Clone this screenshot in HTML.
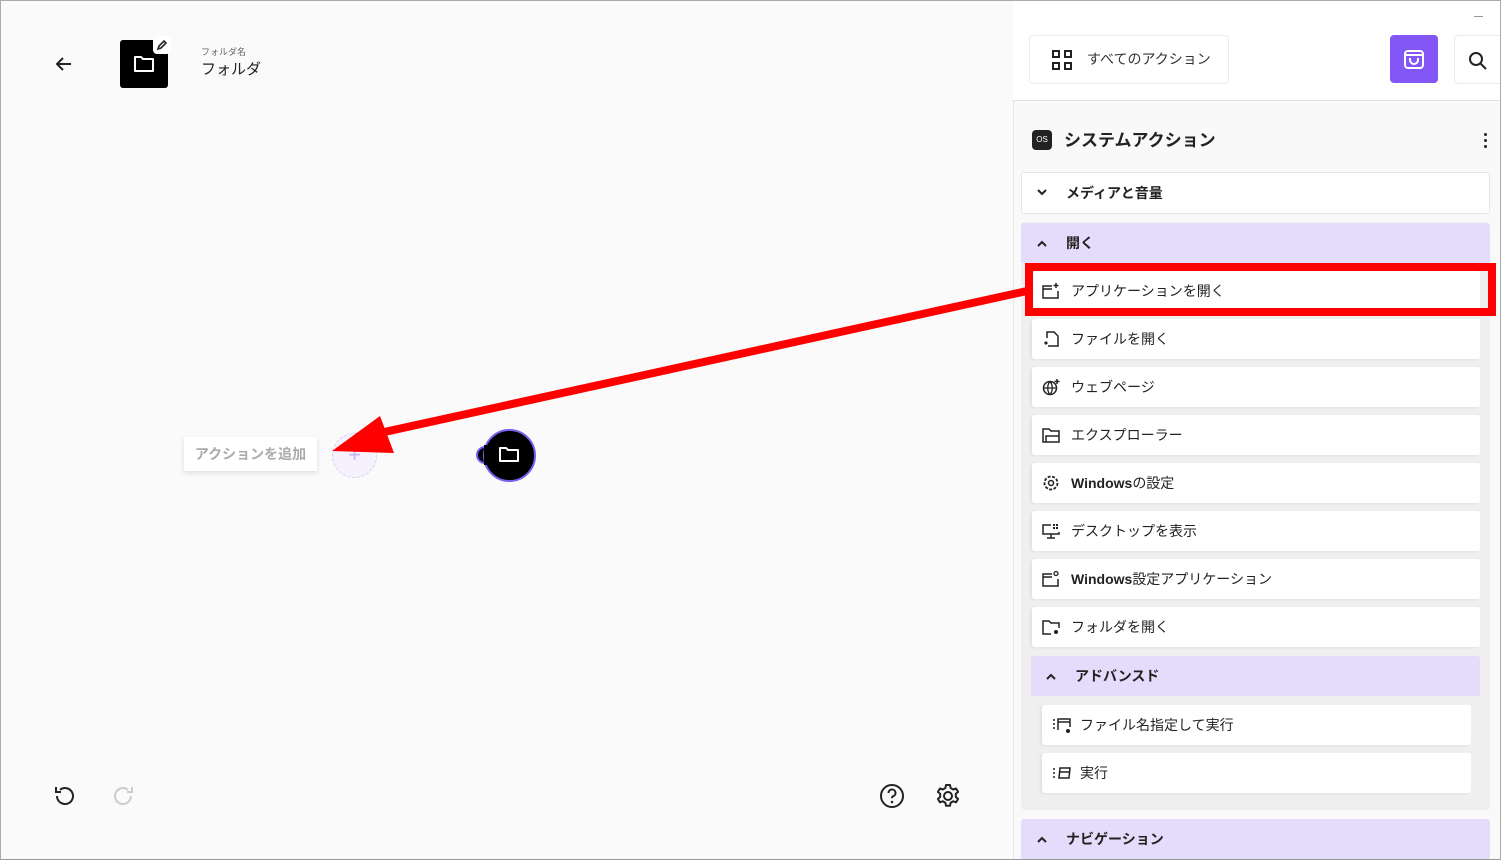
<!DOCTYPE html>
<html><head><meta charset="utf-8"><style>
*{box-sizing:border-box;margin:0;padding:0}
body{width:1501px;height:860px;overflow:hidden;background:#fafafa;font-family:"Liberation Sans","Noto Sans CJK JP",sans-serif;color:#222;position:relative}
.a{position:absolute}
.item{position:absolute;left:1032px;width:448px;height:40px;background:#fff;border-radius:3px;box-shadow:-2px 1px 2px #e2e2e2;font-size:14px;display:flex;align-items:center;padding-left:39px}
.item svg{position:absolute;left:10px;top:11px}
.hdr{position:absolute;background:#e4dcfa;height:40px;font-size:14px;font-weight:bold;display:flex;align-items:center;border-radius:3px 3px 0 0}
</style></head><body>
<div class="a" style="left:0;top:0;width:1501px;height:860px;border:1px solid #aaa;border-bottom-color:#999;pointer-events:none;z-index:9"></div>
<svg class="a" style="left:54px;top:55px" width="20" height="18" viewBox="0 0 20 18"><path d="M17 9H3M9 3L3 9l6 6" stroke="#222" stroke-width="2" fill="none"/></svg>
<div class="a" style="left:120px;top:40px;width:48px;height:48px;background:#000;border-radius:3px"></div>
<svg class="a" style="left:133px;top:54px" width="22" height="20" viewBox="0 0 22 20"><path d="M2 3h6l2 2h10v12H2z" stroke="#fff" stroke-width="2" fill="none" stroke-linejoin="round"/></svg>
<div class="a" style="left:153px;top:36px;width:18px;height:18px;background:#fff;border-radius:4px"></div>
<svg class="a" style="left:156px;top:39px" width="12" height="12" viewBox="0 0 12 12"><path d="M2 10l1-3 5-5 2 2-5 5z" stroke="#222" stroke-width="1.6" fill="none"/></svg>
<div class="a" style="left:201px;top:45px;font-size:9px;color:#666">フォルダ名</div>
<div class="a" style="left:201px;top:58px;font-size:15px;color:#222">フォルダ</div>
<div class="a" style="left:184px;top:437px;width:133px;height:34px;background:#fff;box-shadow:0 2px 5px #ddd;font-size:14px;color:#aaa;display:flex;align-items:center;justify-content:center;font-weight:bold">アクションを追加</div>
<div class="a" style="left:332px;top:433px;width:45px;height:45px;border:1.5px dashed #d8cffa;border-radius:50%;background:#f5f2fd;color:#c5b5f5;font-size:22px;text-align:center;line-height:42px">+</div>
<div class="a" style="left:476px;top:446px;width:18px;height:18px;border-radius:50%;background:#000;border:2px solid #7b5cf0"></div>
<div class="a" style="left:483px;top:429px;width:53px;height:53px;border-radius:50%;background:#000;border:2px solid #7b5cf0"></div>
<div class="a" style="left:484px;top:445px;width:14px;height:20px;background:#000"></div>
<svg class="a" style="left:498px;top:445px" width="22" height="19" viewBox="0 0 22 19"><path d="M2 3h6l2 2h10v11H2z" stroke="#fff" stroke-width="2" fill="none" stroke-linejoin="round"/></svg>
<svg class="a" style="left:52px;top:784px" width="24" height="24" viewBox="0 0 24 24"><path d="M5 12a8 8 0 1 0 3-6.2M4 3v5h5" stroke="#222" stroke-width="2" fill="none"/></svg>
<svg class="a" style="left:112px;top:784px" width="24" height="24" viewBox="0 0 24 24"><path d="M19 12a8 8 0 1 1-3-6.2M20 3v5h-5" stroke="#ccc" stroke-width="2" fill="none"/></svg>
<svg class="a" style="left:879px;top:783px" width="26" height="26" viewBox="0 0 26 26"><circle cx="13" cy="13" r="11" stroke="#222" stroke-width="2" fill="none"/><path d="M9.5 10a3.5 3.5 0 1 1 4.5 3.3c-.8.3-1 1-1 2" stroke="#222" stroke-width="2" fill="none"/><circle cx="13" cy="19" r="1.3" fill="#222"/></svg>
<svg class="a" style="left:935px;top:783px" width="26" height="26" viewBox="0 0 26 26"><circle cx="13" cy="13" r="4" stroke="#222" stroke-width="2" fill="none"/><path d="M11 2h4l.6 3 2.6 1.5 2.9-1 2 3.4-2.3 2v3l2.3 2-2 3.4-2.9-1-2.6 1.5-.6 3h-4l-.6-3-2.6-1.5-2.9 1-2-3.4 2.3-2v-3l-2.3-2 2-3.4 2.9 1L10.4 5z" stroke="#222" stroke-width="2" fill="none" stroke-linejoin="round"/></svg>
<div class="a" style="left:1013px;top:0;width:488px;height:860px;background:#f9f9f9;border-left:1px solid #e8e8e8"></div>
<div class="a" style="left:1013px;top:0;width:488px;height:101px;background:#fff;border-bottom:1px solid #e2e2e2"></div>
<div class="a" style="left:1474px;top:16px;width:9px;height:1px;background:#999"></div>
<div class="a" style="left:1029px;top:35px;width:200px;height:49px;border:1px solid #eaeaea;border-radius:4px;background:#fff;font-size:14px;color:#333;padding-left:57px;line-height:47px">すべてのアクション</div>
<svg class="a" style="left:1052px;top:50px" width="20" height="20" viewBox="0 0 20 20"><g stroke="#222" stroke-width="2" fill="none"><rect x="1" y="1" width="6" height="6"/><rect x="13" y="1" width="6" height="6"/><rect x="1" y="13" width="6" height="6"/><rect x="13" y="13" width="6" height="6"/></g></svg>
<div class="a" style="left:1390px;top:35px;width:48px;height:48px;background:#8357f5;border-radius:4px"></div>
<svg class="a" style="left:1402px;top:47px" width="24" height="24" viewBox="0 0 24 24"><rect x="3" y="4" width="18" height="17" rx="3" stroke="#fff" stroke-width="2" fill="none"/><path d="M3 8h18M8 11v2a4 4 0 0 0 8 0v-2" stroke="#fff" stroke-width="2" fill="none"/></svg>
<div class="a" style="left:1454px;top:35px;width:60px;height:49px;border:1px solid #eaeaea;border-radius:4px;background:#fff"></div>
<svg class="a" style="left:1468px;top:51px" width="20" height="20" viewBox="0 0 20 20"><circle cx="8" cy="8" r="6" stroke="#222" stroke-width="2" fill="none"/><path d="M12.5 12.5L18 18" stroke="#222" stroke-width="2"/></svg>
<div class="a" style="left:1032px;top:130px;width:20px;height:20px;background:#222;border-radius:4px;color:#fff;font-size:8px;text-align:center;line-height:20px">OS</div>
<div class="a" style="left:1064px;top:126px;font-size:17px;font-weight:bold;color:#222">システムアクション</div>
<div class="a" style="left:1484px;top:133px;width:3px;height:3px;background:#222;border-radius:50%;box-shadow:0 6px 0 #222,0 12px 0 #222"></div>
<div class="a" style="left:1021px;top:172px;width:469px;height:42px;background:#fff;border:1px solid #e6e6e6;border-radius:3px;font-size:14px;font-weight:bold;padding-left:44px;line-height:40px">メディアと音量</div>
<svg class="a" style="left:1036px;top:187px" width="12" height="10" viewBox="0 0 12 10"><path d="M2 3l4 4 4-4" stroke="#222" stroke-width="2" fill="none"/></svg>
<div class="a" style="left:1021px;top:222px;width:469px;height:588px;background:#efefef;border-radius:4px"></div>
<div class="hdr" style="left:1021px;top:223px;width:469px;padding-left:45px">開く</div>
<svg class="a" style="left:1036px;top:239px" width="12" height="10" viewBox="0 0 12 10"><path d="M2 7l4-4 4 4" stroke="#222" stroke-width="2" fill="none"/></svg>
<div class="item" style="top:271px"><svg width="18" height="18" viewBox="0 0 18 18"><path d="M10 4H1v12h15V9M1 7h9" stroke="#222" stroke-width="1.5" fill="none"/><path d="M14 1v5M11.5 3.5h5" stroke="#222" stroke-width="1.5"/></svg>アプリケーションを開く</div>
<div class="item" style="top:319px"><svg width="18" height="18" viewBox="0 0 18 18"><path d="M5 8V2h7l4 4v10H6" stroke="#222" stroke-width="1.5" fill="none"/><path d="M4 11l2 2-2 2-2-2z" fill="#222"/></svg>ファイルを開く</div>
<div class="item" style="top:367px"><svg width="18" height="18" viewBox="0 0 18 18"><circle cx="8" cy="10" r="6.5" stroke="#222" stroke-width="1.5" fill="none"/><path d="M2 10h12M8 3.5c-3 3-3 10 0 13M8 3.5c3 3 3 10 0 13" stroke="#222" stroke-width="1.3" fill="none"/><path d="M15 1v5M12.5 3.5h5" stroke="#222" stroke-width="1.5"/></svg>ウェブページ</div>
<div class="item" style="top:415px"><svg width="18" height="18" viewBox="0 0 18 18"><path d="M1 3h6l2 2h8v11H1zM4 16v-6h13" stroke="#222" stroke-width="1.5" fill="none"/></svg>エクスプローラー</div>
<div class="item" style="top:463px"><svg width="18" height="18" viewBox="0 0 18 18"><circle cx="9" cy="9" r="2.5" stroke="#222" stroke-width="1.5" fill="none"/><circle cx="9" cy="9" r="6.5" stroke="#222" stroke-width="1.8" fill="none" stroke-dasharray="3 1.5"/></svg><span><b>Windows</b>の設定</span></div>
<div class="item" style="top:511px"><svg width="18" height="18" viewBox="0 0 18 18"><path d="M9 3H1v9h16v-2M9 12v4M5 16h8" stroke="#222" stroke-width="1.5" fill="none"/><path d="M11 2h2v2h-2zM14 2h2v2h-2zM11 5h2v2h-2zM14 5h2v2h-2z" fill="#222"/></svg>デスクトップを表示</div>
<div class="item" style="top:559px"><svg width="18" height="18" viewBox="0 0 18 18"><path d="M10 4H1v12h15V9M1 7h9" stroke="#222" stroke-width="1.5" fill="none"/><circle cx="14" cy="3.5" r="2" stroke="#222" stroke-width="1.3" fill="none"/></svg><span><b>Windows</b>設定アプリケーション</span></div>
<div class="item" style="top:607px"><svg width="18" height="18" viewBox="0 0 18 18"><path d="M9 16H1V3h6l2 2h8v5" stroke="#222" stroke-width="1.5" fill="none"/><circle cx="14" cy="14" r="2" fill="#222"/></svg>フォルダを開く</div>
<div class="hdr" style="left:1031px;top:656px;width:449px;padding-left:44px">アドバンスド</div>
<svg class="a" style="left:1045px;top:672px" width="12" height="10" viewBox="0 0 12 10"><path d="M2 7l4-4 4 4" stroke="#222" stroke-width="2" fill="none"/></svg>
<div class="item" style="left:1042px;top:705px;width:429px;padding-left:38px"><svg width="20" height="18" viewBox="0 0 20 18"><path d="M1 4h2M1 8h2M1 12h2M6 14V3h12v8M6 6h12" stroke="#222" stroke-width="1.5" fill="none"/><circle cx="16" cy="15" r="2" fill="#222"/></svg>ファイル名指定して実行</div>
<div class="item" style="left:1042px;top:753px;width:429px;padding-left:38px"><svg width="20" height="18" viewBox="0 0 20 18"><path d="M1 5h2M1 9h2M1 13h2M7 14l1-10h10l-1 10zM7.5 8h10" stroke="#222" stroke-width="1.5" fill="none"/></svg>実行</div>
<div class="hdr" style="left:1021px;top:819px;width:469px;padding-left:45px">ナビゲーション</div>
<svg class="a" style="left:1036px;top:835px" width="12" height="10" viewBox="0 0 12 10"><path d="M2 7l4-4 4 4" stroke="#222" stroke-width="2" fill="none"/></svg>
<div class="a" style="left:1025px;top:263px;width:471px;height:53px;border:8px solid #f00"></div>
<svg class="a" style="left:0;top:0" width="1501" height="860"><path d="M1027 291L380 433" stroke="#f00" stroke-width="8"/><path d="M332 451L380 416L394 453z" fill="#f00"/></svg>
</body></html>
